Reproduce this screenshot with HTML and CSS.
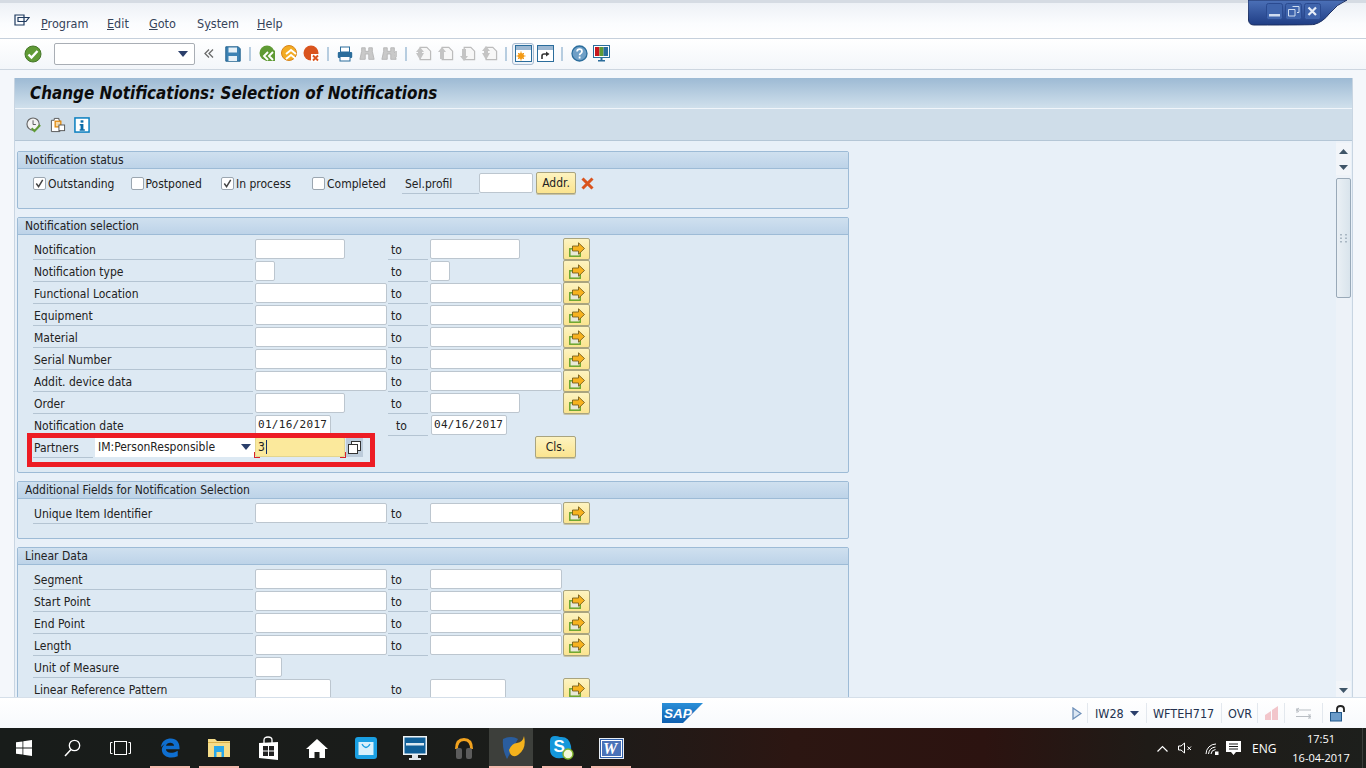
FILE: index.html
```html
<!DOCTYPE html>
<html lang="en">
<head>
<meta charset="utf-8">
<title>Change Notifications: Selection of Notifications</title>
<link rel="stylesheet" href="styles.css">
</head>
<body>
<svg class="defs" width="0" height="0" aria-hidden="true">
  <defs>
    <symbol id="multi" viewBox="0 0 16 16">
      <rect x=".8" y="7.800" width="10.400" height="7.400" fill="#e9e9d8" stroke="#6aa52c" stroke-width="1.500"/>
      <path d="M3.500 5h6V1.800L15.500 7.500 9.500 13.200V10h-6z" fill="#f7b21f" stroke="#6b5314" stroke-width=".8"/>
    </symbol>
    <symbol id="binoc" viewBox="0 0 18 18">
      <path d="M3 2h4v4h4V2h4v4l2 9h-6V9H7v6H1l2-9z" fill="#c9c9c9" stroke="#b5b5b5"/>
    </symbol>
    <symbol id="page" viewBox="0 0 18 18">
      <path d="M5.500 2.500h7l4 4v9h-11z" fill="#f7f7f7" stroke="#bcbcbc" stroke-width="1.300"/>
    </symbol>
  </defs>
</svg>

<div class="app">
  <div class="menubar">
    <svg class="menu-icon" width="16" height="13" viewBox="0 0 16 13"><path d="M1 1h9v10H1zM4 3.500h11l-3 4H4z" fill="none" stroke="#1f3a5f" stroke-width="1.200"/></svg>
    <nav class="menu">
      <span class="m-program"><u>P</u>rogram</span>
      <span class="m-edit"><u>E</u>dit</span>
      <span class="m-goto"><u>G</u>oto</span>
      <span class="m-system">S<u>y</u>stem</span>
      <span><u>H</u>elp</span>
    </nav>
  </div>

  <div class="toolbar">
    <span class="tb tb-first"><svg width="18" height="18" viewBox="0 0 18 18"><circle cx="9" cy="9" r="8" fill="#5f9a35" stroke="#46772a"/><path d="M4.500 9.500l3 3 6-6.500" fill="none" stroke="#fff" stroke-width="2.400"/></svg></span>
    <span class="cmd"><svg class="cmd-arrow" width="10" height="6" viewBox="0 0 10 6"><path d="M0 0h10L5 6z" fill="#2b3f6b"/></svg></span>
    <span class="collapse"><svg width="10" height="9" viewBox="0 0 10 9"><path d="M5 .5L1 4.500l4 4M9 .5L5 4.500l4 4" fill="none" stroke="#6a6a6a" stroke-width="1.300"/></svg></span>
    <span class="tb"><svg width="16" height="16" viewBox="0 0 16 16"><path d="M.8.8h12.500l1.900 2v12.400H.8z" fill="#3c82b4" stroke="#24638f"/><rect x="3.500" y="1.500" width="8.500" height="5" fill="#e7f1f8"/><rect x="3.500" y="10" width="8.500" height="5" fill="#e7f1f8"/></svg></span>
    <span class="sep"></span>
    <span class="tb"><svg width="17" height="17" viewBox="0 0 17 17"><circle cx="8" cy="8" r="7.500" fill="#5f9a35"/><path d="M16 5.500L7 5.500 3 11l4 5h9z" fill="#5f9a35"/><path d="M9 7l-4 4 4 4M14 7l-4 4 4 4" fill="none" stroke="#fff" stroke-width="1.900"/></svg></span>
    <span class="tb"><svg width="17" height="17" viewBox="0 0 17 17"><circle cx="8" cy="8" r="7.500" fill="#f3ac24" stroke="#d8841a"/><path d="M5 9l5-4 5 4M5 14l5-4 5 4" fill="none" stroke="#fff" stroke-width="1.900"/></svg></span>
    <span class="tb"><svg width="17" height="17" viewBox="0 0 17 17"><circle cx="8" cy="8" r="7.500" fill="#d9541e"/><path d="M8 9h9v8H8z" fill="#fff"/><path d="M10 10.500l5 5M15 10.500l-5 5" stroke="#d9541e" stroke-width="1.900"/></svg></span>
    <span class="sep"></span>
    <span class="tb"><svg width="16" height="16" viewBox="0 0 16 16"><rect x="3.500" y="1" width="9" height="5" fill="#fff" stroke="#2b6d9c"/><rect x=".8" y="6" width="14.400" height="6" rx="1" fill="#2b6d9c"/><rect x="3" y="10.500" width="10" height="4.500" fill="#fff" stroke="#2b6d9c"/></svg></span>
    <span class="tb"><svg width="16" height="16"><use href="#binoc"/></svg></span>
    <span class="tb"><svg width="16" height="16"><use href="#binoc"/><path d="M12 7h2V5h2v2h2v2h-2v2h-2V9h-2z" fill="#c9c9c9"/></svg></span>
    <span class="sep"></span>
    <span class="tb"><svg width="17" height="17"><use href="#page"/><path d="M1 7l4-5 4 5H7v1h2l-4 7-4-7h2V7z" fill="#c4c4c4"/></svg></span>
    <span class="tb"><svg width="17" height="17"><use href="#page"/><path d="M1 7l4-5 4 5H7v7H3V7z" fill="#c4c4c4"/></svg></span>
    <span class="tb"><svg width="17" height="17"><use href="#page"/><path d="M3 4h4v7h2l-4 5-4-5h2z" fill="#c4c4c4"/></svg></span>
    <span class="tb"><svg width="17" height="17"><use href="#page"/><path d="M1 6l4-5 4 5H7v2h2l-4 7-4-7h2V6z" fill="#c4c4c4"/></svg></span>
    <span class="sep"></span>
    <span class="tb tb-on"><svg width="17" height="17" viewBox="0 0 17 17"><rect x=".5" y=".5" width="16" height="16" fill="#fff" stroke="#2b6d9c"/><rect x="1" y="1" width="15" height="4" fill="#9db8d2"/><circle cx="6" cy="11" r="3" fill="#f39a16"/><path d="M6 6.500v9M1.500 11h9M3 8l6 6M9 8l-6 6" stroke="#f39a16"/></svg></span>
    <span class="tb"><svg width="17" height="17" viewBox="0 0 17 17"><rect x=".5" y=".5" width="16" height="16" fill="#fff" stroke="#2b6d9c"/><rect x="1" y="1" width="15" height="4" fill="#9db8d2"/><path d="M5 14v-3q0-2 2-2h3" fill="none" stroke="#333" stroke-width="1.600"/><path d="M9 6.500L12.500 9 9 11.500z" fill="#333"/></svg></span>
    <span class="sep"></span>
    <span class="tb"><svg width="17" height="17" viewBox="0 0 17 17"><circle cx="8.500" cy="8.500" r="7.500" fill="#6f9fc6" stroke="#2b6d9c" stroke-width="1.300"/><path d="M6 6.500q.3-2.300 2.500-2.300 2.500 0 2.500 2.200 0 1.300-1.400 2-1 .5-1 1.800" fill="none" stroke="#fff" stroke-width="1.700"/><rect x="7.700" y="11.500" width="1.800" height="2" fill="#fff"/></svg></span>
    <span class="tb"><svg width="17" height="17" viewBox="0 0 17 17"><rect x=".5" y=".5" width="16" height="12" fill="#fff" stroke="#2b6d9c"/><rect x="2" y="2" width="4.500" height="9" fill="#c8171d"/><rect x="6.500" y="2" width="4" height="9" fill="#5f9a35"/><rect x="10.500" y="2" width="4.500" height="9" fill="#2b6d9c"/><path d="M7.500 13h2v2h2.500v1.500H5V15h2.500z" fill="#2b6d9c"/></svg></span>
  </div>

  <main class="panel">
    <h1 class="title">Change Notifications: Selection of Notifications</h1>
    <div class="apptools">
      <svg width="16" height="16" viewBox="0 0 17 17"><circle cx="7.500" cy="7.500" r="6.500" fill="#f2f2f2" stroke="#666" stroke-width="1.200"/><path d="M7.500 3.500v4.500h3" fill="none" stroke="#555"/><path d="M6 12l3 3 6-6.500" fill="none" stroke="#5f9a35" stroke-width="2.200"/></svg>
      <svg width="16" height="16" viewBox="0 0 17 17"><path d="M1.500 3.500h3v-2h5v2h1v12h-9z" fill="#fff" stroke="#555"/><rect x="5.500" y="4.500" width="6" height="6" fill="#f5d9a8" stroke="#e28b12" stroke-width="1.400"/><rect x="9.500" y="8.500" width="6" height="6" fill="#fff" stroke="#555"/></svg>
      <svg width="16" height="16" viewBox="0 0 17 17"><rect x="1" y="1" width="15" height="15" fill="#fff" stroke="#0a7fc0" stroke-width="1.600"/><rect x="7" y="3.500" width="3" height="2.500" fill="#0a6ca8"/><path d="M6 7.500h4V13h1.500v1.500h-5.500V13H7V9H6z" fill="#0a6ca8"/></svg>
    </div>

    <div class="workarea">
      <div class="form">
        <section class="group g-status">
          <h2 class="group-head">Notification status</h2>
          <div class="status-row">
            <label class="check c-1"><span class="box on"><svg width="11" height="11" viewBox="0 0 12 12"><path d="M2.500 6l2.500 3.500L9.500 2" fill="none" stroke="#444" stroke-width="1.600"/></svg></span>Outstanding</label>
            <label class="check c-2"><span class="box"></span>Postponed</label>
            <label class="check c-3"><span class="box on"><svg width="11" height="11" viewBox="0 0 12 12"><path d="M2.500 6l2.500 3.500L9.500 2" fill="none" stroke="#444" stroke-width="1.600"/></svg></span>In process</label>
            <label class="check c-4"><span class="box"></span>Completed</label>
            <span class="lbl prof">Sel.profil</span>
            <span class="field w54"></span>
            <button class="btn addr">Addr.</button>
            <svg class="del" width="13" height="13" viewBox="0 0 13 13"><path d="M1.500 1.500l10 10M11.500 1.500l-10 10" stroke="#d9541e" stroke-width="3"/></svg>
          </div>
        </section>

        <section class="group g-sel">
          <h2 class="group-head">Notification selection</h2>
          <div class="rows">
            <div class="row"><span class="lbl">Notification</span><span class="field w90"></span><span class="to">to</span><span class="field w90"></span><button class="btn arrow"><svg width="16" height="16"><use href="#multi"/></svg></button></div>
            <div class="row"><span class="lbl">Notification type</span><span class="field w20"></span><span class="to">to</span><span class="field w20"></span><button class="btn arrow"><svg width="16" height="16"><use href="#multi"/></svg></button></div>
            <div class="row"><span class="lbl">Functional Location</span><span class="field w132"></span><span class="to">to</span><span class="field w132"></span><button class="btn arrow"><svg width="16" height="16"><use href="#multi"/></svg></button></div>
            <div class="row"><span class="lbl">Equipment</span><span class="field w132"></span><span class="to">to</span><span class="field w132"></span><button class="btn arrow"><svg width="16" height="16"><use href="#multi"/></svg></button></div>
            <div class="row"><span class="lbl">Material</span><span class="field w132"></span><span class="to">to</span><span class="field w132"></span><button class="btn arrow"><svg width="16" height="16"><use href="#multi"/></svg></button></div>
            <div class="row"><span class="lbl">Serial Number</span><span class="field w132"></span><span class="to">to</span><span class="field w132"></span><button class="btn arrow"><svg width="16" height="16"><use href="#multi"/></svg></button></div>
            <div class="row"><span class="lbl">Addit. device data</span><span class="field w132"></span><span class="to">to</span><span class="field w132"></span><button class="btn arrow"><svg width="16" height="16"><use href="#multi"/></svg></button></div>
            <div class="row"><span class="lbl">Order</span><span class="field w90"></span><span class="to">to</span><span class="field w90"></span><button class="btn arrow"><svg width="16" height="16"><use href="#multi"/></svg></button></div>
            <div class="row"><span class="lbl">Notification date</span><span class="field w76 mono">01/16/2017</span><span class="to to-date">to</span><span class="field w76 mono f-date">04/16/2017</span><span></span></div>
            <div class="row row-partner">
              <span class="lbl lbl-partner">Partners</span>
              <span class="partner-select">IM:PersonResponsible<svg width="10" height="6" viewBox="0 0 10 6"><path d="M0 0h10L5 6z" fill="#2b3f6b"/></svg></span>
              <span class="field w90 focus">3<i class="caret"></i></span>
              <span class="f4"><svg width="13" height="13" viewBox="0 0 13 13"><rect x="3.500" y=".5" width="9" height="9" fill="#fff" stroke="#333"/><rect x=".5" y="3.500" width="9" height="9" fill="#fff" stroke="#333"/></svg></span>
              <button class="btn cls">Cls.</button>
              <span class="red-mark"></span>
            </div>
          </div>
        </section>

        <section class="group g-add">
          <h2 class="group-head">Additional Fields for Notification Selection</h2>
          <div class="rows">
            <div class="row"><span class="lbl">Unique Item Identifier</span><span class="field w132"></span><span class="to">to</span><span class="field w132"></span><button class="btn arrow"><svg width="16" height="16"><use href="#multi"/></svg></button></div>
          </div>
        </section>

        <section class="group g-lin">
          <h2 class="group-head">Linear Data</h2>
          <div class="rows">
            <div class="row"><span class="lbl">Segment</span><span class="field w132"></span><span class="to">to</span><span class="field w132"></span><span></span></div>
            <div class="row"><span class="lbl">Start Point</span><span class="field w132"></span><span class="to">to</span><span class="field w132"></span><button class="btn arrow"><svg width="16" height="16"><use href="#multi"/></svg></button></div>
            <div class="row"><span class="lbl">End Point</span><span class="field w132"></span><span class="to">to</span><span class="field w132"></span><button class="btn arrow"><svg width="16" height="16"><use href="#multi"/></svg></button></div>
            <div class="row"><span class="lbl">Length</span><span class="field w132"></span><span class="to">to</span><span class="field w132"></span><button class="btn arrow"><svg width="16" height="16"><use href="#multi"/></svg></button></div>
            <div class="row"><span class="lbl">Unit of Measure</span><span class="field w27"></span><span></span><span></span><span></span></div>
            <div class="row"><span class="lbl">Linear Reference Pattern</span><span class="field w76"></span><span class="to">to</span><span class="field w76"></span><button class="btn arrow"><svg width="16" height="16"><use href="#multi"/></svg></button></div>
          </div>
        </section>
      </div>

      <div class="scrollbar">
        <span class="sc-btn"><svg width="9" height="5" viewBox="0 0 9 5"><path d="M0 5h9L4.500 0z" fill="#3f5568"/></svg></span>
        <span class="sc-btn"><svg width="9" height="5" viewBox="0 0 9 5"><path d="M0 0h9L4.500 5z" fill="#3f5568"/></svg></span>
        <span class="sc-thumb"><svg width="7" height="9" viewBox="0 0 7 9"><path d="M0 0h2v1.500H0zM5 0h2v1.500H5zM0 3.500h2V5H0zM5 3.500h2V5H5zM0 7h2v1.500H0zM5 7h2v1.500H5z" fill="#a9b7c3"/></svg></span>
        <span class="sc-track"></span>
        <span class="sc-btn sc-last"><svg width="9" height="5" viewBox="0 0 9 5"><path d="M0 0h9L4.500 5z" fill="#3f5568"/></svg></span>
      </div>
    </div>
  </main>

  <footer class="statusbar">
    <svg class="sap" width="41" height="20" viewBox="0 0 41 20"><defs><linearGradient id="sapg" x1="0" y1="0" x2="0" y2="1"><stop offset="0" stop-color="#2a8fd8"/><stop offset="1" stop-color="#0f5fb0"/></linearGradient></defs><path d="M0 0h41L21 20H0z" fill="url(#sapg)"/><text x="2" y="14.500" class="sap-text">SAP</text></svg>
    <div class="status-right">
      <svg class="st-play" width="10" height="13" viewBox="0 0 10 13"><path d="M1 1l8 5.500L1 12z" fill="#dbe6f2" stroke="#6d8fb8" stroke-width="1.300"/></svg>
      <span class="st st-tx">IW28<svg width="9" height="5" viewBox="0 0 9 5"><path d="M0 0h9L4.500 5z" fill="#2b3f6b"/></svg></span>
      <span class="st st-user">WFTEH717</span>
      <span class="st st-ovr">OVR</span>
      <span class="st st-ic"><svg width="13" height="14" viewBox="0 0 13 14"><path d="M0 14V9l6-4v9zM7 14V4l6-4v14z" fill="#f2c6cb"/></svg></span>
      <span class="st st-ic2"><svg width="17" height="13" viewBox="0 0 17 13"><path d="M2 1v5M1 3h15M15 7v5M1 9.500h15M4 1L1.500 3 4 5M13 7.500l2.500 2L13 11.500" fill="none" stroke="#b9bec4"/></svg></span>
      <span class="st st-lock"><svg width="16" height="17" viewBox="0 0 16 17"><rect x="0.500" y="7.500" width="11" height="8.500" fill="#6a9bc9" stroke="#22598c"/><path d="M7 7V4q0-3 3.500-3T14 4v3" fill="none" stroke="#222" stroke-width="1.800"/></svg></span>
    </div>
  </footer>

  <div class="taskbar">
    <div class="tasks">
      <span class="task t-48"><svg width="16" height="16" viewBox="0 0 16 16"><path d="M0 2.300l6.500-.9v6.200H0zM7.300 1.300L16 0v7.600H7.300zM0 8.400h6.500v6.200L0 13.700zM7.300 8.400H16V16l-8.700-1.200z" fill="#fff"/></svg></span>
      <span class="task t-48"><svg width="17" height="18" viewBox="0 0 17 18"><circle cx="10.500" cy="6.500" r="5.200" fill="none" stroke="#fff" stroke-width="1.300"/><path d="M7 10.500L1 17" stroke="#fff" stroke-width="1.500"/></svg></span>
      <span class="task t-48 t-view"><svg width="21" height="14" viewBox="0 0 21 14"><rect x="4.500" y=".5" width="12" height="13" fill="none" stroke="#fff"/><path d="M2.500 1.500H.5v11h2M18.500 1.500h2v11h-2" fill="none" stroke="#fff"/></svg></span>
      <span class="task t-icon on-bar"><svg width="20" height="20" viewBox="0 0 22 22"><path d="M1 10C2 3 7 .5 12 .5c6 0 9.500 4 9.500 10.500v1.500H6.500c.3 4 6 5.500 13 1.500v6c-8 3.500-17 1-17.500-7C2 10 4 7 7 5.500 5 6.500 3 8 1 10zM6.500 8.500h9c-.3-4.500-8-4.500-9 0z" fill="#0f6fd0"/></svg></span>
      <span class="task t-icon on-bar"><svg width="22" height="18" viewBox="0 0 22 18"><path d="M0 0h7l2 2h13v16H0z" fill="#f5dc88"/><rect y="3" width="22" height="1" fill="#d8b04a"/><path d="M6 7h10v11h-2.500v-5h-5v5H6z" fill="#27a7ea"/></svg></span>
      <span class="task t-icon"><svg width="21" height="24" viewBox="0 0 21 24"><path d="M1 7l19-1v18L1 22z" fill="#fff"/><path d="M6 7V4q0-3 4-3t4 3v3" fill="none" stroke="#fff" stroke-width="1.300"/><path d="M5 10h5v4.500H5zM11 10h5v4.500h-5zM5 15.500h5V20H5zM11 15.500h5V20h-5z" fill="#222"/></svg></span>
      <span class="task t-icon"><svg width="22" height="19" viewBox="0 0 22 19"><path d="M11 0L22 10h-3v9h-5.500v-6h-5v6H3v-9H0z" fill="#fff"/></svg></span>
      <span class="task t-icon"><svg width="22" height="22" viewBox="0 0 22 22"><rect width="22" height="22" rx="3" fill="#1a9fe2"/><rect x="3.500" y="5" width="15" height="13" fill="#d8f0fb"/><path d="M7 7q4 7 8 0" fill="none" stroke="#1a9fe2" stroke-width="1.300"/></svg></span>
      <span class="task t-icon"><svg width="24" height="24" viewBox="0 0 24 24"><rect width="24" height="19" fill="#eef3f6"/><rect x="1.500" y="1.500" width="21" height="16" fill="#0f5f98"/><rect x="3" y="7" width="18" height="2.500" fill="#dbe8f0"/><path d="M9 19h6v3h3v2H6v-2h3z" fill="#dfe5ea"/></svg></span>
      <span class="task t-icon"><svg width="20" height="21" viewBox="0 0 20 21"><path d="M2.500 11Q2.500 1.500 10 1.500T17.500 11" fill="none" stroke="#f2a21e" stroke-width="3"/><rect x="2" y="10" width="6" height="11" rx="2" fill="#5c5c5c"/><rect x="12" y="10" width="6" height="11" rx="2" fill="#5c5c5c"/></svg></span>
      <span class="task t-icon t-active on-bar"><svg width="24" height="24" viewBox="0 0 24 24"><path d="M1 3q9-4 15 0L5 23Q0 14 1 3z" fill="#2a5d9e"/><path d="M7 14q3-7 8-7 6-1 7-7 3 13-6 19-7 4-9-5z" fill="#f4b21c"/></svg></span>
      <span class="task t-icon on-bar"><svg width="24" height="24" viewBox="0 0 24 24"><path d="M0 5q0-5 5-5 3 0 5 1 9-1 11 9 1 3-1 7-2 5-9 5-4 1-7-1-4-2-4-8 0-4 0-8z" fill="#1597db"/><text x="3.500" y="16" class="sk">S</text><circle cx="18" cy="18" r="5" fill="#f2f8d8" stroke="#7fb32a" stroke-width="1.400"/></svg></span>
      <span class="task t-icon on-bar"><svg width="25" height="21" viewBox="0 0 25 21"><rect width="25" height="21" fill="#e7edf5"/><rect x="1.500" y="1.500" width="22" height="18" fill="#fff" stroke="#2f5ea8"/><rect x="3" y="3" width="19" height="15" fill="#4a72b8"/><text x="4" y="16" class="wd">W</text></svg></span>
    </div>
    <div class="tray">
      <svg class="tray-i i-up" width="11" height="7" viewBox="0 0 11 7"><path d="M.5 6.500l5-5 5 5" fill="none" stroke="#fff" stroke-width="1.200"/></svg>
      <svg class="tray-i i-sp" width="15" height="12" viewBox="0 0 15 12"><path d="M.5 4h2.500l3.500-3v10l-3.500-3H.5z" fill="none" stroke="#fff"/><path d="M9.500 4.500l3.500 3.500M13 4.500L9.500 8" stroke="#fff"/></svg>
      <svg class="tray-i i-wi" width="15" height="13" viewBox="0 0 15 13"><path d="M1 12a10 10 0 0 1 10-10M3.500 12a8 8 0 0 1 7-7M6 12a5 5 0 0 1 4.500-4.500" fill="none" stroke="#fff"/><rect x="10" y="9.500" width="3.500" height="3.500" fill="#fff"/></svg>
      <svg class="tray-i i-ch" width="15" height="15" viewBox="0 0 15 15"><path d="M0 0h15v11h-5l-2.500 3L5 11H0z" fill="#fff"/><path d="M3 3h9M3 5.500h9M3 8h9" stroke="#1a1a1a"/></svg>
      <span class="eng">ENG</span>
      <span class="clock"><span>17:51</span><span>16-04-2017</span></span>
      <span class="desk-edge"></span>
    </div>
  </div>

  <svg class="winctl" width="100" height="26" viewBox="0 0 100 26">
    <defs><linearGradient id="wing" x1="0" y1="0" x2="0" y2="1"><stop offset="0" stop-color="#4c71b8"/><stop offset="1" stop-color="#1f3d85"/></linearGradient></defs>
    <path d="M0 0h99q-10 4-18 14-6 8-15 10.500-3 .5-60 .5-5 0-5.500-5z" fill="url(#wing)" stroke="#1c2f62"/>
    <g fill="#3f64ac" stroke="#2a4a90"><rect x="18.500" y="3.500" width="16" height="16" rx="2"/><rect x="37.500" y="3.500" width="16" height="16" rx="2"/><rect x="56.500" y="3.500" width="16" height="16" rx="2"/></g>
    <rect x="21" y="14" width="11" height="2.500" fill="#cfdcf0"/>
    <path d="M44.500 6.500h6.500v6h-2M40.500 9.500h6.500v6.500h-6.500z" fill="none" stroke="#cfdcf0"/>
    <path d="M60.500 7.500l7.500 7.500M68 7.500L60.500 15" stroke="#e6edf8" stroke-width="2.200"/>
  </svg>
</div>
</body>
</html>
```
FILE: styles.css
```css
* { box-sizing: border-box; }
html, body { margin: 0; padding: 0; }
body {
  width: 1366px;
  height: 768px;
  overflow: hidden;
  background: #f4f7fb;
  font-family: "DejaVu Sans Condensed", "DejaVu Sans", sans-serif;
  font-size: 12px;
  color: #222;
}
.defs { position: absolute; }
.app {
  position: relative;
  width: 1366px;
  height: 768px;
  display: flex;
  flex-direction: column;
  overflow: hidden;
}

/* menu */
.menubar {
  height: 39px;
  flex: none;
  display: flex;
  align-items: center;
  padding: 3px 0 0 14px;
  background: linear-gradient(#edf1f6, #fbfcfe 60%, #fff);
  border-top: 3px solid #d5dbe3;
  border-bottom: 1px solid #c6d0dc;
}
.menu-icon { flex: none; margin: -3px 0 0 0; }
.menu { display: flex; margin-left: 11px; font-size: 12.500px; color: #36435a; margin-top: 3px; }
.menu span { display: block; }
.m-program { width: 66px; }
.m-edit { width: 42px; }
.m-goto { width: 48px; }
.m-system { width: 60px; }

/* toolbar */
.toolbar {
  height: 31px;
  flex: none;
  display: flex;
  align-items: center;
  padding: 0 0 1px 22px;
  background: linear-gradient(#fff, #f3f6fa);
  border-bottom: 1px solid #cdd6e0;
}
.tb { width: 22px; height: 22px; flex: none; display: flex; align-items: center; justify-content: center; }
.tb-first { margin-right: 10px; }
.tb-on { border: 1px solid #a9bbd0; border-radius: 3px; background: #eef3f9; }
.sep { width: 12px; flex: none; height: 20px; position: relative; }
.sep::after { content: ""; position: absolute; left: 5px; top: 3px; bottom: 3px; width: 2px; background: #b7cde0; }
.cmd {
  width: 141px;
  height: 22px;
  flex: none;
  display: flex;
  align-items: center;
  justify-content: flex-end;
  padding-right: 6px;
  background: #fff;
  border: 1px solid #a9aeb5;
  border-radius: 2px;
}
.collapse { width: 27px; flex: none; display: flex; justify-content: center; }

/* main panel */
.panel {
  flex: 1;
  min-height: 0;
  display: flex;
  flex-direction: column;
  margin: 8px 13px 0 14px;
  border-left: 1px solid #c8d5e2;
  border-right: 1px solid #c8d5e2;
  background: #e8f0f8;
}
.title {
  margin: 0;
  height: 31px;
  flex: none;
  padding: 5px 0 0 15px;
  font-family: "DejaVu Sans Condensed", "DejaVu Sans", sans-serif;
  font-size: 16.900px;
  font-weight: bold;
  font-style: italic;
  color: #0c0c0c;
  line-height: 20px;
  background: linear-gradient(#9dbad4, #d0e0ec);
  border-bottom: 1px solid #f0f5fa;
}
.apptools {
  height: 32px;
  flex: none;
  display: flex;
  align-items: center;
  gap: 8px;
  padding: 0 0 0 11px;
  background: #cfdde9;
  border-bottom: 1px solid #b4c6d6;
}
.workarea { flex: 1; min-height: 0; display: flex; overflow: hidden; }
.form { width: 1321px; flex: none; padding: 10px 0 0 2px; overflow: hidden; }

/* groups */
.group {
  width: 832px;
  margin-bottom: 8px;
  background: #dde9f3;
  border: 1px solid #9dbbd6;
  border-radius: 2px;
}
.group-head {
  margin: 0;
  height: 17px;
  padding-left: 7px;
  font-size: 12px;
  font-weight: normal;
  line-height: 16px;
  color: #222;
  background: linear-gradient(#cfe0ef, #bdd3e8);
  border-bottom: 1px solid #9dbbd6;
}
.rows { padding: 3px 0 14px 15px; }

.status-row {
  display: flex;
  align-items: center;
  height: 22px;
  margin: 3px 0 14px 15px;
}
.check { display: flex; align-items: center; height: 22px; color: #222; padding-top: 1px; flex: none; }
.c-1 { width: 97.500px; }
.c-2 { width: 90.500px; }
.c-3 { width: 91px; }
.c-4 { width: 90px; }
.box {
  width: 13px;
  height: 13px;
  flex: none;
  display: flex;
  align-items: center;
  justify-content: center;
  background: #fff;
  border: 1px solid #9ba6b0;
  border-radius: 2px;
  margin-right: 2px;
}
.lbl {
  display: block;
  height: 22px;
  padding: 3px 0 0 1px;
  line-height: 18px;
  border-bottom: 1px solid #b4c4d2;
  white-space: nowrap;
}
.prof { width: 77px; padding-left: 3px; flex: none; }
.field {
  display: block;
  height: 20px;
  line-height: 18px;
  background: #fff;
  border: 1px solid #bcc6cf;
  border-radius: 2px;
  padding-left: 2px;
  position: relative;
}
.w20 { width: 20px; }
.w27 { width: 27px; }
.w54 { width: 54px; }
.w76 { width: 76px; }
.w90 { width: 90px; }
.w132 { width: 132px; }
.mono { font-family: "DejaVu Sans Mono", "Liberation Mono", monospace; font-size: 11px; letter-spacing: .3px; }
.f-date { margin-left: 1px; }

.row {
  display: grid;
  grid-template-columns: 222px 133px 42px 133px 27px;
  height: 22px;
  align-items: center;
  position: relative;
}
.row .lbl { margin-right: 2px; }
.to {
  display: block;
  height: 22px;
  padding: 3px 0 0 3px;
  line-height: 18px;
  margin-right: 2px;
  border-bottom: 1px solid #b4c4d2;
}
.to-date { padding-left: 8px; }
.btn {
  margin: 0;
  padding: 0;
  display: flex;
  align-items: center;
  justify-content: center;
  font-family: inherit;
  font-size: 12px;
  color: #222;
  background: linear-gradient(#fdf3c0, #fbe48f);
  border: 1px solid #a9a47f;
  border-radius: 2px;
  box-shadow: 0 1px 0 #c7c3a8;
}
.arrow { width: 27px; height: 22px; }
.addr { width: 40px; height: 22px; margin-left: 3px; flex: none; }
.del { margin-left: 5px; flex: none; }

/* partners row */
.row-partner { display: flex; align-items: center; }
.lbl-partner { width: 60px; margin-right: 2px !important; flex: none; }
.partner-select {
  width: 160px;
  height: 20px;
  display: flex;
  align-items: center;
  justify-content: space-between;
  padding: 0 4px 0 3px;
  background: #fff;
  font-size: 12px;
  flex: none;
}
.focus { background: #fbe99c; border-color: #e3d68f; }
.focus::before, .focus::after {
  content: "";
  position: absolute;
  bottom: -2px;
  width: 5px;
  height: 5px;
  border-bottom: 1px solid #d8232a;
}
.focus::before { left: -2px; border-left: 1px solid #d8232a; }
.focus::after { right: -2px; border-right: 1px solid #d8232a; }
.caret { display: inline-block; width: 1px; height: 14px; background: #12306a; vertical-align: -3px; margin-left: 1px; }
.f4 {
  width: 17px;
  height: 20px;
  margin-left: 1px;
  padding-right: 1px;
  display: flex;
  align-items: center;
  justify-content: center;
  background: #bccbda;
  flex: none;
}
.cls { width: 41px; height: 22px; margin-left: 172px; flex: none; }
.red-mark {
  position: absolute;
  left: -6px;
  top: -3px;
  width: 348px;
  height: 34px;
  border: 5px solid #ed1c24;
  pointer-events: none;
}

/* scrollbar */
.scrollbar {
  width: 15px;
  flex: none;
  display: flex;
  flex-direction: column;
  background: #edf2f8;
  padding-top: 2px;
}
.sc-btn { height: 16px; flex: none; display: flex; align-items: center; justify-content: center; background: #f2f5f9; }
.sc-thumb {
  height: 120px;
  flex: none;
  margin-top: 3px;
  display: flex;
  align-items: center;
  justify-content: center;
  background: linear-gradient(90deg, #eaf0f5, #d9e4ec);
  border: 1px solid #99a9b8;
  border-radius: 2px;
}
.sc-track { flex: 1; }
.sc-last { padding-top: 2px; }

/* status bar */
.statusbar {
  position: relative;
  height: 31px;
  flex: none;
  display: flex;
  align-items: center;
  justify-content: flex-end;
  background: linear-gradient(#fff, #f7f9fc);
  border-top: 1px solid #d5dfe9;
}
.sap { position: absolute; left: 662px; top: 5px; }
.sap-text { font-family: "Liberation Sans", sans-serif; font-weight: bold; font-style: italic; font-size: 13.500px; fill: #fff; }
.status-right { display: flex; align-items: center; height: 24px; padding-right: 20px; font-size: 12.500px; color: #24324f; }
.st-play { margin-right: 5px; flex: none; }
.st { display: flex; align-items: center; height: 20px; border-left: 1px solid #e3e8ee; padding: 0 6px; flex: none; }
.st-tx { width: 59px; gap: 6px; padding-left: 7px; }
.st-user { width: 75px; }
.st-ovr { width: 36px; }
.st-ic { width: 27px; justify-content: center; padding: 0; }
.st-ic2 { width: 38px; justify-content: center; padding: 0; }
.st-lock { width: 24px; justify-content: flex-end; padding-right: 0; }

/* taskbar */
.taskbar {
  height: 40px;
  flex: none;
  display: flex;
  justify-content: space-between;
  background: linear-gradient(90deg, #181c1a 0%, #1b1c1a 42%, #2c1612 58%, #2c1310 72%, #1f1b17 84%, #1d1f1c 100%);
  color: #fff;
}
.tasks { display: flex; padding-right: 0; }
.task { height: 40px; display: flex; align-items: center; justify-content: center; position: relative; flex: none; }
.t-48 { width: 48px; }
.t-view { width: 50px; padding-right: 2px; }
.t-icon { width: 49px; padding-right: 1px; }
.t-active { background: linear-gradient(#3d3f3b, #3d3f3b) no-repeat 0 0 / 44px 100%; padding-right: 0; }
.on-bar::after { content: ""; position: absolute; left: 4px; right: 5px; bottom: 0; height: 2px; background: #f4b8ad; }
.t-active::after { left: 0; }
.sk { font-family: "Liberation Sans", sans-serif; font-weight: bold; font-size: 17px; fill: #fff; }
.wd { font-family: "Liberation Serif", serif; font-weight: bold; font-style: italic; font-size: 16px; fill: #fff; }
.tray { display: flex; align-items: center; }
.tray-i { flex: none; }
.i-up { margin-right: 10px; }
.i-sp { margin-right: 12px; }
.i-wi { margin-right: 6px; }
.i-ch { margin-right: 11px; }
.eng { width: 23px; margin-right: 17px; font-family: "Open Sans", sans-serif; font-size: 12px; white-space: nowrap; }
.clock { display: flex; flex-direction: column; align-items: center; width: 58px; font-family: "Open Sans", sans-serif; font-size: 11px; line-height: 19px; white-space: nowrap; }
.desk-edge { width: 1px; height: 40px; margin-left: 12px; margin-right: 3px; background: #3b3d3a; }

.winctl { position: absolute; left: 1248px; top: 0; }
```
